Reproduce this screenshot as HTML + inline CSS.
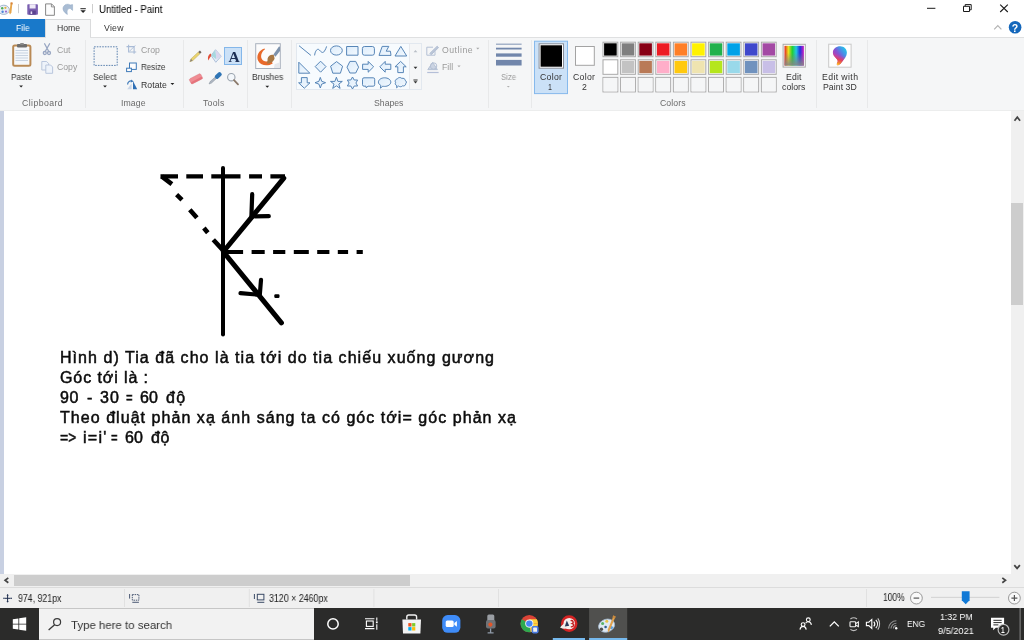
<!DOCTYPE html>
<html lang="vi"><head><meta charset="utf-8"><title>Untitled - Paint</title>
<style>
html,body{margin:0;padding:0;}
body{width:1024px;height:640px;overflow:hidden;position:relative;background:#fff;font-family:"Liberation Sans",sans-serif;}
.t{position:absolute;will-change:transform;white-space:pre;line-height:14px;height:14px;font-family:"Liberation Sans",sans-serif;}
.a{position:absolute;}
svg{position:absolute;overflow:visible;}

</style></head>
<body>
<!-- title bar -->
<div class="a" style="left:0;top:0;width:1024px;height:37px;background:#fff"></div>
<!-- tabs -->
<div class="a" style="left:0;top:18.5px;width:45px;height:18.5px;background:#1979ca"></div>
<div class="a" style="left:45px;top:18.500px;width:46px;height:19.500px;background:#f5f6f7;border:1px solid #dadbdc;border-bottom:none;box-sizing:border-box"></div>
<!-- ribbon -->
<div class="a" style="left:0;top:37px;width:1024px;height:73.5px;background:#f5f6f7;border-top:1px solid #dfe0e1;border-bottom:1px solid #eceded;box-sizing:border-box"></div>
<div class="a" style="left:46px;top:36px;width:44px;height:3px;background:#f5f6f7"></div>
<!-- canvas -->
<div class="a" style="left:0;top:110.5px;width:1011px;height:463px;background:#c8d0e2"></div>
<div class="a" style="left:3.6px;top:110.5px;width:1007.4px;height:463px;background:#fff"></div>
<!-- v scrollbar -->
<div class="a" style="left:1011px;top:110.5px;width:13px;height:463px;background:#f0f0f0"></div>
<div class="a" style="left:1011px;top:203px;width:12.3px;height:101.500px;background:#cdcdcd"></div>
<!-- h scrollbar -->
<div class="a" style="left:0;top:573.5px;width:1024px;height:14px;background:#f0f0f0"></div>
<div class="a" style="left:13.600px;top:574.700px;width:396.400px;height:11.200px;background:#cdcdcd"></div>
<!-- status bar -->
<div class="a" style="left:0;top:587px;width:1024px;height:21px;background:#f0f0f0;border-top:1px solid #dcdcdc;box-sizing:border-box"></div>
<!-- taskbar -->
<div class="a" style="left:0;top:608px;width:1024px;height:32px;background:#2b2b2a"></div>
<div class="a" style="left:38.500px;top:608px;width:275.200px;height:32px;background:#f2f2f2;border-top:1px solid #c6c6c6;border-bottom:1px solid #c6c6c6;box-sizing:border-box"></div>
<!-- drawing on canvas -->
<svg style="left:0;top:0" width="1024" height="640" viewBox="0 0 1024 640">
<g stroke="#000" stroke-width="4" fill="none" stroke-linecap="round">
<line x1="223" y1="168" x2="223" y2="334.500"/>
<line x1="283.800" y1="178.200" x2="223.500" y2="251.500" stroke-width="5"/>
<line x1="223.500" y1="252" x2="281.400" y2="322.800" stroke-width="5"/>
<polyline points="252.200,194.200 251.400,216.300 268.800,216.200" stroke-width="4.200" stroke-linejoin="round"/>
<polyline points="240.500,293.200 259.800,294.800 261,279.800" stroke-width="4.200" stroke-linejoin="round"/>
</g>
<g stroke="#000" stroke-width="4.2" fill="none" stroke-linecap="butt">
<path d="M160.5 176.3H178M186.3 176.3H203M211.300 176.300H240.500M249.100 176.300H262M270.400 176.300H285"/>
<path d="M223.4 252H243.1M251.6 252H264.7M273.1 252H285.3M293.8 252H308.8M317.2 252H329.4M337.8 252H348.1M356.6 252H362.8"/>
<path d="M161.7 176.4L171.9 184.2M176.6 194.7L182 199.8M189.8 209.7L196.9 217.8M203.9 228L207.8 232.7M213.3 239.7L223.4 250.6" stroke-width="4.6"/>
</g>
<rect x="274.300" y="294.200" width="5.200" height="3.700" rx="1.200" fill="#000"/>
</svg>
<!-- ribbon separators -->
<div class="a" style="left:85px;top:40px;width:1px;height:68px;background:#e8e9ea"></div>
<div class="a" style="left:182.5px;top:40px;width:1px;height:68px;background:#e8e9ea"></div>
<div class="a" style="left:246.5px;top:40px;width:1px;height:68px;background:#e8e9ea"></div>
<div class="a" style="left:291.3px;top:40px;width:1px;height:68px;background:#e8e9ea"></div>
<div class="a" style="left:488px;top:40px;width:1px;height:68px;background:#e8e9ea"></div>
<div class="a" style="left:531px;top:40px;width:1px;height:68px;background:#e8e9ea"></div>
<div class="a" style="left:816.3px;top:40px;width:1px;height:68px;background:#e8e9ea"></div>
<div class="a" style="left:867px;top:40px;width:1px;height:68px;background:#e8e9ea"></div>
<!-- clipboard group icons -->
<svg style="left:0;top:0" width="100" height="110" viewBox="0 0 100 110">
 <!-- paste -->
 <rect x="13.2" y="45.6" width="17.2" height="20.2" rx="1.5" fill="#fdfdfd" stroke="#b98a55" stroke-width="2"/>
 <rect x="15" y="47.6" width="13.6" height="16.4" fill="#f4f7fb"/>
 <path d="M15.5 50.5H28M15.5 53H28M15.5 55.5H28M15.5 58H28M15.5 60.5H28" stroke="#c3cede" stroke-width="0.9"/>
 <rect x="17" y="44" width="10" height="3.4" rx="1" fill="#6e6e6e"/>
 <rect x="20" y="43" width="4" height="2" rx="1" fill="#8a8a8a"/>
 <path d="M19.2 85.6h3.8l-1.9 2z" fill="#222"/>
 <!-- cut -->
 <g stroke="#98a6c2" stroke-width="1.3" fill="none" stroke-linecap="round">
  <path d="M44.6 43.8L48.8 51.5M49.6 43.8L45.2 51.5"/>
  <circle cx="44.8" cy="53" r="1.5"/><circle cx="49" cy="53" r="1.5"/>
 </g>
 <!-- copy -->
 <g fill="#eef3fa" stroke="#b3c2da" stroke-width="0.9">
  <path d="M41.8 61.5h4.8l2 2v6.5h-6.8z"/>
  <path d="M45.8 65h4.8l2 2v6.3h-6.8z"/>
 </g>
</svg>
<!-- image group icons -->
<svg style="left:0;top:0" width="200" height="110" viewBox="0 0 200 110">
 <rect x="94.1" y="46.8" width="23.1" height="18.6" fill="none" stroke="#5f84b0" stroke-width="1" stroke-dasharray="1.6 1.1"/>
 <path d="M103.1 85.4h3.8l-1.9 2z" fill="#222"/>
 <!-- crop -->
 <g stroke="#a9bbd6" stroke-width="1.1" fill="none">
  <path d="M126.5 46.6h7.6v7.2M128.6 44.8v7.2h7.6"/>
  <path d="M129.5 51.2l5.8-5.8" stroke-width="0.9"/>
 </g>
 <!-- resize -->
 <rect x="129.5" y="63" width="6.8" height="6.4" fill="#fdfdfe" stroke="#3f7ab8" stroke-width="1"/>
 <rect x="126.6" y="68.2" width="4.8" height="3.4" fill="#fdfdfe" stroke="#3f7ab8" stroke-width="1"/>
 <!-- rotate -->
 <path d="M133 81v8.3h4.2z" fill="#2f6fb5"/>
 <path d="M131.6 83.5v5.8h-4.4z" fill="#c9d6e8"/>
 <path d="M127.6 84.5c0-3 2.5-4.2 4.6-3.2" fill="none" stroke="#3f7ab8" stroke-width="1.2"/>
 <path d="M131.3 79.6l2.2 1.9-2.8 1z" fill="#3f7ab8"/>
 <path d="M170.5 83h3.8l-1.9 2z" fill="#222"/>
</svg>
<!-- tools group icons -->
<div class="a" style="left:224px;top:47px;width:18px;height:18px;background:#cbe1f7;border:1px solid #84b7ea;box-sizing:border-box"></div>
<span class="t" style="left:227.500px;top:49.600px;width:12px;text-align:center;font-family:'Liberation Serif',serif;font-weight:bold;font-size:15.5px;line-height:14px;color:#1c2f55">A</span>
<svg style="left:0;top:0" width="300" height="110" viewBox="0 0 300 110">
 <!-- pencil -->
 <g transform="translate(189.800,61.700) rotate(-43.200)">
  <path d="M0 0l2.800-1.250h10v2.500h-10z" fill="#e9d36f" stroke="#b5a35c" stroke-width="0.400"/>
  <path d="M0 0l2.800-1.250v2.500z" fill="#8d8577"/>
  <rect x="12.800" y="-1.250" width="2.200" height="2.500" fill="#6f675e"/>
 </g>
 <!-- fill bucket -->
 <path d="M215.500 49.700l5.700 6.500-5.400 6.100-4.700-6.800z" fill="#e3edf7" stroke="#9fb4d2" stroke-width="0.800"/>
 <path d="M215.500 49.700l0.800 9.500-5.200-3.700z" fill="#a8d8df"/>
 <path d="M215.500 49.700l0.800 9.500 4.900-3z" fill="#d9d6ee"/>
 <path d="M211 53.600c-2.800 1-3.600 4.200-2.600 6.800 0.800-1.800 1.600-3.200 2.800-4.400z" fill="#e2503a"/>
 <!-- eraser -->
 <g transform="translate(190.200,81.500) rotate(-27)">
  <rect x="0" y="-2.6" width="12.6" height="5.6" rx="1.2" fill="#f08c93" stroke="#d9747c" stroke-width="0.5"/>
  <rect x="0" y="1" width="12.6" height="2" rx="1" fill="#e5737c"/>
 </g>
 <!-- picker -->
 <g transform="translate(209,84) rotate(-42.5)">
  <path d="M0 0l2.5-1h7.5v2h-7.5z" fill="#aeb6c2" stroke="#7d8794" stroke-width="0.4"/>
  <rect x="8.8" y="-2.1" width="7.6" height="4.2" rx="1.8" fill="#2f75b5"/>
 </g>
 <!-- magnifier -->
 <circle cx="231.3" cy="77.2" r="3.7" fill="#f3f7fb" stroke="#9aa3ae" stroke-width="1.1"/>
 <path d="M234 80.2l4 4.2" stroke="#8b7a6b" stroke-width="1.8" stroke-linecap="round"/>
 <!-- brushes -->
 <rect x="255.7" y="43.7" width="24.6" height="24.8" fill="#fcfcfc" stroke="#a9b1bd" stroke-width="1"/>
 <path d="M264.5 48.4c-5.6 1.6-8.8 7.6-6.2 12.6 2.6 4.8 9.6 5.6 14.4 2.4l-1.6-3.4c-3.4 2-7.8 2-9.4-1.2-1.6-3.4 0.4-7.6 3.4-9.6z" fill="#e8692a"/>
 <path d="M267.6 58.6c0.6-2.8 3.6-4.6 6.2-3.6l0.8 3.4c-0.8 3.2-4.4 5.4-8 5.2 1.2-1.4 0.8-3.2 1-5z" fill="#a87844"/>
 <path d="M273.4 54.6l5.6-8.2 1 0.4v4.2l-4.6 5.8z" fill="#7e93ad"/>
 <path d="M274.6 64.2l5.4-2v5.9h-6z" fill="#e6e8ec"/>
 <path d="M265.4 85.8h3.8l-1.9 2z" fill="#222"/>
</svg>
<!-- shapes gallery -->
<div class="a" style="left:296.4px;top:43.3px;width:125.2px;height:47px;background:#f7fbfe;border:1px solid #e2e8ef;box-sizing:border-box"></div>
<div class="a" style="left:409.4px;top:44.3px;width:11.2px;height:45px;background:#f5f6f7;border-left:1px solid #e6e9ee;box-sizing:border-box"></div>
<svg style="left:0;top:0" width="500" height="110" viewBox="0 0 500 110">
<defs><linearGradient id="sf" x1="0" y1="0" x2="1" y2="1"><stop offset="0" stop-color="#dcecfb"/><stop offset="1" stop-color="#f3f9fe"/></linearGradient></defs>
<g fill="url(#sf)" stroke="#4f7fb3" stroke-width="0.95" stroke-linejoin="round">
 <path d="M299 45.7L310.9 55.4" fill="none"/>
 <path d="M314.6 55.4c0.6-5 3-7.4 4.8-5.4 1.8 2.2 3.4 3.6 5 1.2 1-1.6 1.8-3.2 2.2-4.8" fill="none"/>
 <ellipse cx="336.4" cy="50.5" rx="5.9" ry="4.6"/>
 <rect x="346.6" y="46.5" width="11.4" height="8.7"/>
 <rect x="362.4" y="46.5" width="12" height="8.7" rx="2"/>
 <path d="M382.2 46.4h6.6l-2.6 4.8h4.2l0.6 4.2h-12z"/>
 <path d="M400.8 46.4l5.9 9.6h-11.7z"/>
 <path d="M298.8 62.2v11h11z"/>
 <path d="M320.6 61.2l5.4 5.4-5.4 5.6-5.4-5.6z"/>
 <path d="M336.6 61.6l6 4.6-2.2 7h-7.6l-2.2-7z"/>
 <path d="M349.9 61.4h5.8l2.9 5.8-2.9 5.8h-5.8l-2.9-5.8z"/>
 <path d="M362.6 64.2h5.6v-2.8l5.4 5.4-5.4 5.4v-2.8h-5.6z"/>
 <path d="M390.8 64.2h-5.6v-2.8l-5.4 5.4 5.4 5.4v-2.8h5.6z"/>
 <path d="M397.8 72.6v-5.8h-2.8l5.6-5.4 5.6 5.4h-2.8v5.8z"/>
 <path d="M301.4 77.6h5.8v5.2h2.8l-5.7 5.4-5.7-5.4h2.8z"/>
 <path d="M320.3 77.4l1.4 3.9 3.9 1.4-3.9 1.4-1.4 3.9-1.4-3.9-3.9-1.4 3.9-1.4z"/>
 <path d="M336.4 77.2l1.5 4.2h4.4l-3.5 2.7 1.3 4.3-3.7-2.6-3.7 2.6 1.3-4.3-3.5-2.7h4.4z"/>
 <path d="M352.5 77l1.7 3h3.4l-1.7 3 1.7 3h-3.4l-1.7 3-1.7-3h-3.4l1.7-3-1.7-3h3.4z"/>
 <path d="M364 77.8h9.2a1.5 1.5 0 0 1 1.5 1.5v5.4a1.5 1.5 0 0 1 -1.5 1.5h-5.2l-1.8 1.6-0.2-1.6h-2a1.5 1.5 0 0 1 -1.5-1.5v-5.4a1.5 1.5 0 0 1 1.5-1.5z"/>
 <path d="M384.6 77.8c3.4 0 6.2 1.9 6.2 4.3s-2.800 4.300-6.200 4.300c-0.600 0-1.200 0-1.800-0.200l-2.400 2 0.400-2.800c-1.500-0.800-2.400-2-2.400-3.300 0-2.400 2.800-4.300 6.200-4.300z"/>
 <path d="M397.600 78.600c1-1.400 3.200-1.400 4.200-0.200 1.600-0.600 3.400 0.400 3.400 2 1.400 0.600 1.600 2.600 0.400 3.400 0.200 1.600-1.600 2.600-3 2-1 1.200-3 1.200-4 0.200l-2 1.800 0.200-2.200c-1.400-0.400-2-2-1.200-3.200-1-1.200-0.200-3.200 2-3.800z"/>
</g>
<path d="M413.600 52.300h3.800l-1.900-2.200z" fill="#b9bec6"/>
<path d="M413.600 66.700h3.800l-1.900 2.200z" fill="#333"/>
<path d="M413.600 81.300h3.800l-1.900 2.200zM413.400 79.600h4.200v1h-4.200z" fill="#333"/>
<!-- outline / fill icons -->
<g stroke="#b4c0d4" fill="none" stroke-width="1">
 <path d="M433 47.200h-6.200v8h8.200v-4"/>
 <path d="M429.800 53.400l7.400-7.200 1.400 1.400-7.400 7.200z" fill="#b9c4d6"/>
 <path d="M427.200 72.500h11.400" stroke-width="1.200" stroke="#b4bfd8"/>
 <path d="M432.600 62.400l4.800 7.200h-9.600z" fill="#cbd4e3"/>
 <circle cx="433.600" cy="66" r="3.200" />
</g>
<path d="M476.200 47.800h3.200l-1.600 1.800z" fill="#a8a8a8"/>
<path d="M457.400 65.400h3.200l-1.600 1.800z" fill="#a8a8a8"/>
</svg>
<!-- size + colors -->
<svg style="left:0;top:0" width="900" height="110" viewBox="0 0 900 110">
<g fill="#7186ab"><rect x="496" y="43.7" width="25.600" height="0.900"/><rect x="496" y="47.700" width="25.600" height="1.800"/><rect x="496" y="53.400" width="25.600" height="3.300"/><rect x="496" y="59.900" width="25.600" height="5.600"/></g>
<path d="M506.800 86h3l-1.500 1.600z" fill="#b0b0b0"/>
<rect x="534.500" y="41.200" width="33" height="52.400" fill="#cbe1f7" stroke="#86b9ec" stroke-width="1"/>
<rect x="539.100" y="43.800" width="24.400" height="24.400" fill="#fff" stroke="#8a8f99" stroke-width="1"/>
<rect x="540.600" y="45.300" width="21.400" height="21.400" fill="#000"/>
<rect x="575.500" y="46.500" width="18.800" height="18.800" fill="#fff" stroke="#a3a3a3" stroke-width="1"/>
<rect x="577" y="48" width="15.800" height="15.800" fill="#fff"/>
<rect x="603.0" y="42.2" width="14.800" height="14.500" fill="#fff" stroke="#a8a8a8" stroke-width="1"/>
<rect x="604.1" y="43.3" width="12.600" height="12.300" fill="#000000"/>
<rect x="620.6" y="42.2" width="14.800" height="14.500" fill="#fff" stroke="#a8a8a8" stroke-width="1"/>
<rect x="621.7" y="43.3" width="12.600" height="12.300" fill="#7f7f7f"/>
<rect x="638.2" y="42.2" width="14.800" height="14.500" fill="#fff" stroke="#a8a8a8" stroke-width="1"/>
<rect x="639.3" y="43.3" width="12.600" height="12.300" fill="#880015"/>
<rect x="655.8" y="42.2" width="14.800" height="14.500" fill="#fff" stroke="#a8a8a8" stroke-width="1"/>
<rect x="656.9" y="43.3" width="12.600" height="12.300" fill="#ed1c24"/>
<rect x="673.4" y="42.2" width="14.800" height="14.500" fill="#fff" stroke="#a8a8a8" stroke-width="1"/>
<rect x="674.5" y="43.3" width="12.600" height="12.300" fill="#ff7f27"/>
<rect x="691.0" y="42.2" width="14.800" height="14.500" fill="#fff" stroke="#a8a8a8" stroke-width="1"/>
<rect x="692.1" y="43.3" width="12.600" height="12.300" fill="#fff200"/>
<rect x="708.6" y="42.2" width="14.800" height="14.500" fill="#fff" stroke="#a8a8a8" stroke-width="1"/>
<rect x="709.7" y="43.3" width="12.600" height="12.300" fill="#22b14c"/>
<rect x="726.2" y="42.2" width="14.800" height="14.500" fill="#fff" stroke="#a8a8a8" stroke-width="1"/>
<rect x="727.3" y="43.3" width="12.600" height="12.300" fill="#00a2e8"/>
<rect x="743.8" y="42.2" width="14.800" height="14.500" fill="#fff" stroke="#a8a8a8" stroke-width="1"/>
<rect x="744.9" y="43.3" width="12.600" height="12.300" fill="#3f48cc"/>
<rect x="761.4" y="42.2" width="14.800" height="14.500" fill="#fff" stroke="#a8a8a8" stroke-width="1"/>
<rect x="762.5" y="43.3" width="12.600" height="12.300" fill="#a349a4"/>
<rect x="603.0" y="59.8" width="14.800" height="14.500" fill="#fff" stroke="#a8a8a8" stroke-width="1"/>
<rect x="604.1" y="60.9" width="12.600" height="12.300" fill="#ffffff"/>
<rect x="620.6" y="59.8" width="14.800" height="14.500" fill="#fff" stroke="#a8a8a8" stroke-width="1"/>
<rect x="621.7" y="60.9" width="12.600" height="12.300" fill="#c3c3c3"/>
<rect x="638.2" y="59.8" width="14.800" height="14.500" fill="#fff" stroke="#a8a8a8" stroke-width="1"/>
<rect x="639.3" y="60.9" width="12.600" height="12.300" fill="#b97a57"/>
<rect x="655.8" y="59.8" width="14.800" height="14.500" fill="#fff" stroke="#a8a8a8" stroke-width="1"/>
<rect x="656.9" y="60.9" width="12.600" height="12.300" fill="#ffaec9"/>
<rect x="673.4" y="59.8" width="14.800" height="14.500" fill="#fff" stroke="#a8a8a8" stroke-width="1"/>
<rect x="674.5" y="60.9" width="12.600" height="12.300" fill="#ffc90e"/>
<rect x="691.0" y="59.8" width="14.800" height="14.500" fill="#fff" stroke="#a8a8a8" stroke-width="1"/>
<rect x="692.1" y="60.9" width="12.600" height="12.300" fill="#efe4b0"/>
<rect x="708.6" y="59.8" width="14.800" height="14.500" fill="#fff" stroke="#a8a8a8" stroke-width="1"/>
<rect x="709.7" y="60.9" width="12.600" height="12.300" fill="#b5e61d"/>
<rect x="726.2" y="59.8" width="14.800" height="14.500" fill="#fff" stroke="#a8a8a8" stroke-width="1"/>
<rect x="727.3" y="60.9" width="12.600" height="12.300" fill="#99d9ea"/>
<rect x="743.8" y="59.8" width="14.800" height="14.500" fill="#fff" stroke="#a8a8a8" stroke-width="1"/>
<rect x="744.9" y="60.9" width="12.600" height="12.300" fill="#7092be"/>
<rect x="761.4" y="59.8" width="14.800" height="14.500" fill="#fff" stroke="#a8a8a8" stroke-width="1"/>
<rect x="762.5" y="60.9" width="12.600" height="12.300" fill="#c8bfe7"/>
<rect x="603.0" y="77.4" width="14.800" height="14.500" fill="#fff" stroke="#a8a8a8" stroke-width="1"/>
<rect x="603.5" y="77.9" width="13.800" height="13.500" fill="#f5f6f7"/>
<rect x="620.6" y="77.4" width="14.800" height="14.500" fill="#fff" stroke="#a8a8a8" stroke-width="1"/>
<rect x="621.1" y="77.9" width="13.800" height="13.500" fill="#f5f6f7"/>
<rect x="638.2" y="77.4" width="14.800" height="14.500" fill="#fff" stroke="#a8a8a8" stroke-width="1"/>
<rect x="638.7" y="77.9" width="13.800" height="13.500" fill="#f5f6f7"/>
<rect x="655.8" y="77.4" width="14.800" height="14.500" fill="#fff" stroke="#a8a8a8" stroke-width="1"/>
<rect x="656.3" y="77.9" width="13.800" height="13.500" fill="#f5f6f7"/>
<rect x="673.4" y="77.4" width="14.800" height="14.500" fill="#fff" stroke="#a8a8a8" stroke-width="1"/>
<rect x="673.9" y="77.9" width="13.800" height="13.500" fill="#f5f6f7"/>
<rect x="691.0" y="77.4" width="14.800" height="14.500" fill="#fff" stroke="#a8a8a8" stroke-width="1"/>
<rect x="691.5" y="77.9" width="13.800" height="13.500" fill="#f5f6f7"/>
<rect x="708.6" y="77.4" width="14.800" height="14.500" fill="#fff" stroke="#a8a8a8" stroke-width="1"/>
<rect x="709.1" y="77.9" width="13.800" height="13.500" fill="#f5f6f7"/>
<rect x="726.2" y="77.4" width="14.800" height="14.500" fill="#fff" stroke="#a8a8a8" stroke-width="1"/>
<rect x="726.7" y="77.9" width="13.800" height="13.500" fill="#f5f6f7"/>
<rect x="743.8" y="77.4" width="14.800" height="14.500" fill="#fff" stroke="#a8a8a8" stroke-width="1"/>
<rect x="744.3" y="77.9" width="13.800" height="13.500" fill="#f5f6f7"/>
<rect x="761.4" y="77.4" width="14.800" height="14.500" fill="#fff" stroke="#a8a8a8" stroke-width="1"/>
<rect x="761.9" y="77.9" width="13.800" height="13.500" fill="#f5f6f7"/>
<defs><linearGradient id="rb" x1="0" y1="0" x2="1" y2="0"><stop offset="0" stop-color="#e02020"/><stop offset="0.200" stop-color="#f0e020"/><stop offset="0.400" stop-color="#20d030"/><stop offset="0.600" stop-color="#20c8e0"/><stop offset="0.800" stop-color="#2030e0"/><stop offset="1" stop-color="#d020c0"/></linearGradient><linearGradient id="gy" x1="0" y1="0" x2="0" y2="1"><stop offset="0.350" stop-color="#808080" stop-opacity="0"/><stop offset="1" stop-color="#868686" stop-opacity="0.950"/></linearGradient><linearGradient id="p3" x1="0.900" y1="0.100" x2="0.200" y2="0.800"><stop offset="0" stop-color="#22c8ea"/><stop offset="0.350" stop-color="#4f86e6"/><stop offset="0.600" stop-color="#8a4fd0"/><stop offset="1" stop-color="#c63aa8"/></linearGradient><linearGradient id="p3b" x1="0.500" y1="0.450" x2="0.350" y2="1"><stop offset="0" stop-color="#d8409a" stop-opacity="0"/><stop offset="0.450" stop-color="#e6405a" stop-opacity="0.950"/><stop offset="0.800" stop-color="#f5902a"/><stop offset="1" stop-color="#ffd83a"/></linearGradient></defs>
<rect x="783.100" y="44.300" width="22.200" height="22.800" fill="#fff" stroke="#a9a9a9" stroke-width="1"/>
<rect x="784.500" y="45.800" width="19.400" height="19.800" fill="url(#rb)"/>
<rect x="784.500" y="45.800" width="19.400" height="19.800" fill="url(#gy)"/>
<rect x="828.700" y="44.200" width="22.400" height="23" fill="#fff" stroke="#c9c9c9" stroke-width="1"/>
<path d="M840.200 46.300c3.900 0 6.700 2.900 6.700 6.500 0 3.600-2.600 6.200-4.600 8.800-1 1.400-2.200 3.200-4 3.600-1.200 0.200-1.800-0.800-1.400-1.800 0.400-1 1-1.600 0.800-2.600-0.300-1.400-1.800-2.400-3-4-1.200-1.500-1.800-2.800-1.800-4.400 0-3.500 3.300-6.100 7.300-6.100z" fill="url(#p3)"/><path d="M840.200 46.300c3.900 0 6.700 2.900 6.700 6.500 0 3.600-2.600 6.200-4.600 8.800-1 1.400-2.200 3.200-4 3.600-1.200 0.200-1.800-0.800-1.400-1.800 0.400-1 1-1.600 0.800-2.600-0.300-1.400-1.800-2.400-3-4-1.200-1.500-1.800-2.800-1.800-4.400 0-3.500 3.300-6.100 7.300-6.100z" fill="url(#p3b)"/>
</svg>
<!-- title bar icons -->
<svg style="left:0;top:0" width="1024" height="40" viewBox="0 0 1024 40">
 <!-- app icon (palette + brush), cut at the left edge -->
 <ellipse cx="3.800" cy="9.800" rx="5.600" ry="4.600" fill="#e8eef6" stroke="#8fa6c4" stroke-width="0.800"/>
 <circle cx="2.200" cy="8.200" r="1.200" fill="#4fae5a"/><circle cx="5.400" cy="7.800" r="1.100" fill="#e3b13c"/>
 <circle cx="2.600" cy="11.800" r="1.200" fill="#4b87d9"/><circle cx="6" cy="11.600" r="1.100" fill="#9a6ad0"/>
 <path d="M10.800 2.600l1.600 0.400-1 9.600-1.400 1.800-0.800-1.800z" fill="#e7a64b"/>
 <path d="M10.600 2.400h2v2h-2z" fill="#d9843a"/>
 <rect x="18" y="4" width="0.900" height="9.200" fill="#c8c8c8"/>
 <!-- save -->
 <rect x="27.300" y="4.300" width="10.600" height="10.400" rx="0.800" fill="#7a5fb0"/>
 <rect x="29.600" y="4.300" width="6" height="4.200" fill="#efeaf8"/>
 <rect x="29.400" y="10.600" width="6.400" height="4.100" fill="#5a4390"/>
 <rect x="30.600" y="11.400" width="1.600" height="2.600" fill="#e6def5"/>
 <!-- new -->
 <path d="M45.600 3.900h6l2.800 2.800v8.600h-8.800z" fill="#fdfdfd" stroke="#7a7a7a" stroke-width="0.900"/>
 <path d="M51.400 3.900v3h3" fill="none" stroke="#7a7a7a" stroke-width="0.800"/>
 <!-- undo (disabled) -->
 <path d="M72.600 4.600v5.800l-2.200-1.800c-2.400-0.400-4 1.600-3 5.800-3.600-2-5.400-5.400-3.800-8 1.600-2.400 4.400-2.800 6.600-1.400z" fill="#a9bcd3" stroke="#8fa6c2" stroke-width="0.500"/>
 <!-- qat dropdown -->
 <rect x="80.400" y="8.200" width="5.400" height="1" fill="#222"/>
 <path d="M80.400 10.200h5.400l-2.700 2.700z" fill="#222"/>
 <rect x="92" y="4" width="0.900" height="9.200" fill="#c8c8c8"/>
 <!-- window controls -->
 <path d="M927 8.300h8.400" stroke="#1a1a1a" stroke-width="1"/>
 <path d="M963.500 6.300h6v5.200h-6z" fill="none" stroke="#1a1a1a" stroke-width="1"/>
 <path d="M965.200 6.300v-1.700h6v5.200h-1.700" fill="none" stroke="#1a1a1a" stroke-width="1"/>
 <path d="M1000.200 4.600l7.600 7.400M1007.800 4.600l-7.600 7.400" stroke="#1a1a1a" stroke-width="1.100"/>
 <!-- collapse + help -->
 <path d="M994.200 29.400l3.600-3.800 3.600 3.800" fill="none" stroke="#b4b4b4" stroke-width="1.200"/>
 <circle cx="1015.100" cy="27.300" r="6.300" fill="#1467bb"/>
</svg>
<span class="t" style="left:1010.100px;top:20.500px;width:10px;text-align:center;font-weight:bold;font-size:10.500px;color:#fff">?</span>
<!-- scrollbar arrows, status bar, taskbar icons -->
<svg style="left:0;top:0" width="1024" height="640" viewBox="0 0 1024 640">
 <!-- v scrollbar arrows -->
 <path d="M1014.500 120.700l2.800-3.500 2.800 3.500" fill="none" stroke="#444" stroke-width="1.700"/>
 <path d="M1014.300 565.100l2.800 3.300 2.800-3.300" fill="none" stroke="#444" stroke-width="1.700"/>
 <!-- h scrollbar arrows -->
 <path d="M8.300 577.900l-3.200 2.400 3.200 2.400" fill="none" stroke="#444" stroke-width="1.700"/>
 <path d="M1002.300 577.900l3.200 2.400-3.200 2.400" fill="none" stroke="#444" stroke-width="1.700"/>
 <!-- status separators -->
 <g fill="#e1e1e1"><rect x="124" y="589" width="1" height="18"/><rect x="248.800" y="589" width="1" height="18"/><rect x="373.400" y="589" width="1" height="18"/><rect x="498" y="589" width="1" height="18"/><rect x="866" y="589" width="1" height="18"/></g>
 <!-- cursor pos icon -->
 <g stroke="#1e2e4e" stroke-width="1" fill="#1e2e4e">
  <path d="M7.600 594.400v7.800M4.600 598.300h6" fill="none"/>
  <path d="M6.400 595.600l1.200-1.400 1.200 1.400zM6.400 601l1.200 1.400 1.200-1.400z" stroke="none"/>
  <rect x="3.300" y="597.700" width="1.200" height="1.200" stroke="none"/><rect x="10.700" y="597.700" width="1.200" height="1.200" stroke="none"/>
 </g>
 <!-- selection size icon -->
 <g stroke="#3a4a66" stroke-width="0.900" fill="none">
  <rect x="132.300" y="594.600" width="6.600" height="5.600" stroke-dasharray="1.500 0.800"/>
  <path d="M129.600 594v4.600M132.300 602.300h6.600"/>
 </g>
 <!-- image size icon -->
 <g stroke="#3a4a66" stroke-width="1" fill="none">
  <rect x="257.300" y="594.300" width="6.600" height="5.600"/>
  <path d="M254.400 594v5M257.300 602.300h7"/>
 </g>
 <!-- zoom controls -->
 <circle cx="916.400" cy="598.100" r="5.900" fill="#f9f9f9" stroke="#8d8d8d" stroke-width="0.900"/>
 <path d="M913.600 598.100h5.600" stroke="#555" stroke-width="1.200"/>
 <circle cx="1014.400" cy="598.100" r="5.900" fill="#f9f9f9" stroke="#8d8d8d" stroke-width="0.900"/>
 <path d="M1011.400 598.100h6M1014.400 595.100v6" stroke="#555" stroke-width="1.200"/>
 <rect x="931" y="596.800" width="68.400" height="1.200" fill="#d6d6d6"/>
 <path d="M961.800 591.200h7.800v9l-3.900 4-3.900-4z" fill="#1079d6"/>
 <!-- taskbar: start -->
 <g fill="#fff">
  <path d="M12.800 619.200l5.600-0.800v5.300h-5.600zM19.200 618.300l7-1v6.400h-7zM12.800 624.400h5.600v5.200l-5.600-0.800zM19.200 624.400h7v6.300l-7-1z"/>
 </g>
 <!-- search icon -->
 <circle cx="57.100" cy="622.100" r="3.500" fill="none" stroke="#3a3a3a" stroke-width="1.200"/>
 <path d="M54.600 624.700l-6 5.400" stroke="#3a3a3a" stroke-width="1.300"/>
 <!-- cortana -->
 <circle cx="333" cy="623.900" r="5.200" fill="none" stroke="#fff" stroke-width="1.500"/>
 <!-- task view -->
 <g stroke="#fff" stroke-width="1.100" fill="none">
  <path d="M365 618.800h9.400M365 628.600h9.400M376.800 617.600v3.200M376.800 624.200v5.600"/>
  <rect x="366.400" y="621" width="6.800" height="5.400"/>
  <rect x="375.900" y="621.400" width="1.800" height="1.800" fill="#fff" stroke="none"/>
 </g>
 <!-- store -->
 <path d="M406.800 619.600v-2.600a2 2 0 0 1 2-2h5.800a2 2 0 0 1 2 2v2.600" fill="none" stroke="#f1f1f1" stroke-width="1.400"/>
 <path d="M402.400 619.500h18.600l-0.600 14h-17.400z" fill="#f3f3f3"/>
 <rect x="408.300" y="623.100" width="3.200" height="3.400" fill="#f1511b"/><rect x="412.100" y="623.100" width="3.200" height="3.400" fill="#80cc28"/>
 <rect x="408.300" y="627.100" width="3.200" height="3.400" fill="#00adef"/><rect x="412.100" y="627.100" width="3.200" height="3.400" fill="#fbbc09"/>
 <!-- zoom -->
 <rect x="442.200" y="615.100" width="18.200" height="17.700" rx="5.500" fill="#3f8cf8"/>
 <rect x="445.700" y="620.600" width="8" height="6.500" rx="1.500" fill="#fff"/>
 <path d="M454.300 623l2.600-2v5.800l-2.600-2z" fill="#fff"/>
 <!-- recorder -->
 <rect x="487.300" y="614.400" width="7" height="7.400" rx="1.500" fill="#9a9ea3"/>
 <rect x="486" y="620" width="9.600" height="8.400" rx="2" fill="#6f7276"/>
 <circle cx="490.400" cy="624.600" r="2.100" fill="#e0562a"/>
 <path d="M490.600 628.400v4M487.600 632.900h6" stroke="#8f9aa8" stroke-width="1.300"/>
 <!-- chrome -->
 <circle cx="529.300" cy="623.600" r="8.700" fill="#dc4437"/>
 <path d="M529.300 623.600l-7.540 -4.350a8.700 8.700 0 0 0 7.540 13.050a8.700 8.700 0 0 0 1.500 -0.130z" fill="#2da94f"/>
 <path d="M529.300 623.600h8.700a8.700 8.700 0 0 1 -7.200 8.570z" fill="#fdd23d"/>
 <path d="M529.300 623.600l8.700 0a8.700 8.700 0 0 0 -1.160 -4.350h-7.540z" fill="#fdd23d"/>
 <circle cx="529.300" cy="623.600" r="4.100" fill="#f4f4f4"/><circle cx="529.300" cy="623.600" r="3.200" fill="#4687f4"/>
 <rect x="531.600" y="626" width="7" height="7.400" rx="1.800" fill="#4a7be0"/><rect x="533.200" y="627.600" width="3.800" height="4.200" rx="0.600" fill="#f1f1f1"/>
 <!-- red app -->
 <rect x="552.800" y="638" width="32.200" height="2" fill="#76b9ed"/>
 <circle cx="569.200" cy="623.600" r="7" fill="#f6f0ee" stroke="#d52424" stroke-width="2.600"/>
 <path d="M560 627.600c2.600-3.600 5.600-5.600 8.800-6.400l-0.600 6.800c-2.600 1.200-5.400 1-8.200-0.400z" fill="#f4ecea"/>
 <path d="M566.800 620.400l2.400 5.400-4.400 0.600z" fill="#2a3a5a"/>
 <path d="M570.600 620.600c2.400-0.600 3.600 2 1.600 3 2.400 0.600 1.800 3.600-1.400 3.200" fill="none" stroke="#c02020" stroke-width="1.400"/>
 <!-- paint (active) -->
 <rect x="589.100" y="608" width="38.100" height="32" fill="#50504e"/>
 <rect x="589.100" y="638" width="38.100" height="2" fill="#76b9ed"/>
 <ellipse cx="606.600" cy="625.600" rx="8.200" ry="6.400" transform="rotate(-18 606.600 625.600)" fill="#dfe9f3" stroke="#9fb6cf" stroke-width="0.700"/>
 <circle cx="601.400" cy="629.200" r="1.700" fill="#50504e"/>
 <circle cx="602.600" cy="623.400" r="1.500" fill="#58b368"/><circle cx="606.800" cy="621.200" r="1.500" fill="#e8c44a"/>
 <circle cx="605.600" cy="627" r="1.300" fill="#2f5f8f"/><circle cx="611.400" cy="627.600" r="1.600" fill="#5aa0e0"/>
 <path d="M613.600 615.800l1.800 1-5.600 13.400-1.800 2.200-0.200-3z" fill="#e2a24c"/>
 <path d="M613.200 615.200l2.600 1.400-1 2.200-2.400-1.400z" fill="#c98a3e"/>
 <!-- people -->
 <g stroke="#fff" stroke-width="1.100" fill="none">
  <circle cx="803.100" cy="624.600" r="1.900"/><path d="M800 629.600c0.300-2.400 1.600-3.200 3.100-3.200s2.800 0.800 3.100 3.200"/>
  <circle cx="808.300" cy="619.800" r="1.900"/><path d="M805.600 623.200c0.500-1 1.500-1.500 2.700-1.500 1.500 0 2.800 0.800 3.100 3.200"/>
 </g>
 <!-- chevron -->
 <path d="M829.800 626.400l4.500-4.500 4.500 4.500" fill="none" stroke="#fff" stroke-width="1.300"/>
 <!-- meet now -->
 <g stroke="#f0f0f0" stroke-width="1.100" fill="none">
  <rect x="850" y="621.700" width="5.600" height="5" rx="0.800"/>
  <path d="M855.800 623.400l2.600-1.400v4.600l-2.600-1.400"/>
  <path d="M850.400 619c1.800-1.400 4.800-1.400 6.600 0M850.400 629.400c1.800 1.400 4.800 1.400 6.600 0" stroke="#bdbdbd"/>
 </g>
 <!-- speaker -->
 <g stroke="#fff" stroke-width="1.100" fill="none">
  <path d="M866.400 622.200h2.400l3-2.800v9l-3-2.800h-2.400z"/>
  <path d="M873.800 621.600c1.200 1.400 1.200 3.400 0 4.800M875.800 619.800c2.200 2.400 2.200 6 0 8.400"/>
  <path d="M877.800 618.400c2.400 3.200 2.400 8 0 11.200" stroke="#c8c8c8"/>
 </g>
 <!-- wifi -->
 <g fill="none" stroke="#8f8f8f" stroke-width="1.100">
  <path d="M888.600 628.600a7.800 7.800 0 0 1 7.800-7.800"/><path d="M891 628.600a5.400 5.400 0 0 1 5.400-5.400"/><path d="M893.400 628.600a3 3 0 0 1 3-3"/>
 </g>
 <circle cx="896.200" cy="628.300" r="1.200" fill="#fff"/>
 <!-- notification -->
 <path d="M991 617.700h13.100v10.100h-8.300l-2.600 2.400v-2.400h-2.200z" fill="#fff"/>
 <path d="M993.400 620.300h8.300M993.400 622.600h8.300M993.400 624.900h5" stroke="#2a2a29" stroke-width="1"/>
 <circle cx="1003.500" cy="629.800" r="5.400" fill="#2a2a29" stroke="#bdbdbd" stroke-width="1.200"/>
 <rect x="1019.600" y="608" width="1" height="32" fill="#8a8a8a"/>
</svg>

<!-- labels -->
<span class="t" id="l0" style="left:98.60px;top:3.20px;font-size:10px;color:#000;letter-spacing:0.000px;transform:scaleX(0.9666);transform-origin:0 50%;">Untitled - Paint</span>
<span class="t" id="l1" style="left:15.80px;top:21.10px;font-size:8.7px;color:#fff;letter-spacing:0.000px;transform:scaleX(0.9643);transform-origin:0 50%;">File</span>
<span class="t" id="l2" style="left:56.60px;top:21.10px;font-size:8.7px;color:#333;letter-spacing:0.000px;transform:scaleX(0.9919);transform-origin:0 50%;">Home</span>
<span class="t" id="l3" style="left:103.50px;top:21.10px;font-size:8.7px;color:#333;letter-spacing:0.271px;">View</span>
<span class="t" id="l4" style="left:10.70px;top:69.80px;font-size:8.7px;color:#333;letter-spacing:0.000px;transform:scaleX(0.9406);transform-origin:0 50%;">Paste</span>
<span class="t" id="l5" style="left:56.60px;top:42.80px;font-size:8.7px;color:#9a9a9a;letter-spacing:0.000px;transform:scaleX(0.9903);transform-origin:0 50%;">Cut</span>
<span class="t" id="l6" style="left:56.60px;top:60.40px;font-size:8.7px;color:#9a9a9a;letter-spacing:0.000px;transform:scaleX(0.9812);transform-origin:0 50%;">Copy</span>
<span class="t" id="l7" style="left:93.00px;top:69.80px;font-size:8.7px;color:#333;letter-spacing:0.000px;transform:scaleX(0.9770);transform-origin:0 50%;">Select</span>
<span class="t" id="l8" style="left:140.60px;top:42.80px;font-size:8.7px;color:#9a9a9a;letter-spacing:0.000px;transform:scaleX(0.9765);transform-origin:0 50%;">Crop</span>
<span class="t" id="l9" style="left:140.60px;top:60.40px;font-size:8.7px;color:#333;letter-spacing:0.000px;transform:scaleX(0.9186);transform-origin:0 50%;">Resize</span>
<span class="t" id="l10" style="left:140.60px;top:78.00px;font-size:8.7px;color:#333;letter-spacing:0.038px;">Rotate</span>
<span class="t" id="l11" style="left:252.40px;top:69.90px;font-size:8.7px;color:#333;letter-spacing:0.000px;transform:scaleX(0.9820);transform-origin:0 50%;">Brushes</span>
<span class="t" id="l12" style="left:442.00px;top:42.50px;font-size:8.7px;color:#9a9a9a;letter-spacing:0.511px;">Outline</span>
<span class="t" id="l13" style="left:442.00px;top:60.00px;font-size:8.7px;color:#9a9a9a;letter-spacing:0.000px;transform:scaleX(0.9902);transform-origin:0 50%;">Fill</span>
<span class="t" id="l14" style="left:500.50px;top:69.90px;font-size:8.7px;color:#9a9a9a;letter-spacing:0.000px;transform:scaleX(0.8991);transform-origin:0 50%;">Size</span>
<span class="t" id="l15" style="left:539.60px;top:69.90px;font-size:8.7px;color:#333;letter-spacing:0.309px;">Color</span>
<span class="t" id="l16" style="left:548.30px;top:80.20px;font-size:8.7px;color:#333;letter-spacing:0.000px;transform:scaleX(0.8258);transform-origin:0 50%;">1</span>
<span class="t" id="l17" style="left:573.00px;top:69.90px;font-size:8.7px;color:#333;letter-spacing:0.309px;">Color</span>
<span class="t" id="l18" style="left:581.60px;top:80.20px;font-size:8.7px;color:#333;letter-spacing:0.000px;transform:scaleX(0.9910);transform-origin:0 50%;">2</span>
<span class="t" id="l19" style="left:785.80px;top:69.90px;font-size:8.7px;color:#333;letter-spacing:0.155px;">Edit</span>
<span class="t" id="l20" style="left:782.30px;top:80.20px;font-size:8.7px;color:#333;letter-spacing:0.043px;">colors</span>
<span class="t" id="l21" style="left:822.00px;top:69.90px;font-size:8.7px;color:#333;letter-spacing:0.395px;">Edit with</span>
<span class="t" id="l22" style="left:822.70px;top:80.20px;font-size:8.7px;color:#333;letter-spacing:0.067px;">Paint 3D</span>
<span class="t" id="l23" style="left:21.90px;top:96.20px;font-size:8.7px;color:#6a6a6a;letter-spacing:0.427px;">Clipboard</span>
<span class="t" id="l24" style="left:120.50px;top:96.20px;font-size:8.7px;color:#6a6a6a;letter-spacing:0.086px;">Image</span>
<span class="t" id="l25" style="left:203.00px;top:96.20px;font-size:8.7px;color:#6a6a6a;letter-spacing:0.255px;">Tools</span>
<span class="t" id="l26" style="left:374.40px;top:96.20px;font-size:8.7px;color:#6a6a6a;letter-spacing:0.000px;transform:scaleX(0.9943);transform-origin:0 50%;">Shapes</span>
<span class="t" id="l27" style="left:659.70px;top:96.20px;font-size:8.7px;color:#6a6a6a;letter-spacing:0.078px;">Colors</span>
<span class="t" id="l28" style="left:17.60px;top:591.60px;font-size:10px;color:#222;letter-spacing:0.000px;transform:scaleX(0.8768);transform-origin:0 50%;">974, 921px</span>
<span class="t" id="l29" style="left:269.30px;top:591.60px;font-size:10px;color:#222;letter-spacing:0.000px;transform:scaleX(0.8833);transform-origin:0 50%;">3120 × 2460px</span>
<span class="t" id="l30" style="left:883.00px;top:591.10px;font-size:10px;color:#222;letter-spacing:0.000px;transform:scaleX(0.8445);transform-origin:0 50%;">100%</span>
<span class="t" id="l31" style="left:71.20px;top:617.50px;font-size:11.6px;color:#333;letter-spacing:0.000px;transform:scaleX(0.9865);transform-origin:0 50%;">Type here to search</span>
<span class="t" id="l32" style="left:906.70px;top:616.50px;font-size:9.5px;color:#fff;letter-spacing:0.000px;transform:scaleX(0.8789);transform-origin:0 50%;">ENG</span>
<span class="t" id="l33" style="left:940.00px;top:609.70px;font-size:9.6px;color:#fff;letter-spacing:0.000px;transform:scaleX(0.9151);transform-origin:0 50%;">1:32 PM</span>
<span class="t" id="l34" style="left:937.50px;top:623.80px;font-size:9.6px;color:#fff;letter-spacing:0.000px;transform:scaleX(0.9583);transform-origin:0 50%;">9/5/2021</span>
<span class="t" id="l35" style="left:1001.40px;top:622.90px;font-size:8.5px;color:#fff;letter-spacing:0.000px;transform:scaleX(0.7604);transform-origin:0 50%;font-weight:bold;">1</span>
<span class="t" id="l36" style="left:60.00px;top:350.60px;font-size:16px;color:#0c0c0c;letter-spacing:1.045px;-webkit-text-stroke:0.5px #0c0c0c;">Hình d) Tia đã cho là tia tới do tia chiếu xuống gương</span>
<span class="t" id="l37" style="left:60.00px;top:370.60px;font-size:16px;color:#0c0c0c;letter-spacing:0.902px;-webkit-text-stroke:0.5px #0c0c0c;">Góc tới là :</span>
<span class="t" id="l38" style="left:59.90px;top:390.60px;font-size:16px;color:#0c0c0c;letter-spacing:0.703px;-webkit-text-stroke:0.5px #0c0c0c;">90</span>
<span class="t" id="l39" style="left:86.60px;top:390.60px;font-size:16px;color:#0c0c0c;letter-spacing:0.000px;transform:scaleX(0.9947);transform-origin:0 50%;-webkit-text-stroke:0.5px #0c0c0c;">-</span>
<span class="t" id="l40" style="left:100.00px;top:390.60px;font-size:16px;color:#0c0c0c;letter-spacing:1.203px;-webkit-text-stroke:0.5px #0c0c0c;">30</span>
<span class="t" id="l41" style="left:126.20px;top:390.60px;font-size:16px;color:#0c0c0c;letter-spacing:0.000px;transform:scaleX(0.7064);transform-origin:0 50%;-webkit-text-stroke:0.5px #0c0c0c;">=</span>
<span class="t" id="l42" style="left:140.30px;top:390.60px;font-size:16px;color:#0c0c0c;letter-spacing:0.203px;-webkit-text-stroke:0.5px #0c0c0c;">60</span>
<span class="t" id="l43" style="left:165.70px;top:390.60px;font-size:16px;color:#0c0c0c;letter-spacing:1.303px;-webkit-text-stroke:0.5px #0c0c0c;">độ</span>
<span class="t" id="l44" style="left:60.00px;top:410.60px;font-size:16px;color:#0c0c0c;letter-spacing:1.046px;-webkit-text-stroke:0.5px #0c0c0c;">Theo đluật phản xạ ánh sáng ta có góc tới= góc phản xạ</span>
<span class="t" id="l45" style="left:59.90px;top:430.60px;font-size:16px;color:#0c0c0c;letter-spacing:0.000px;transform:scaleX(0.8722);transform-origin:0 50%;-webkit-text-stroke:0.5px #0c0c0c;">=&gt;</span>
<span class="t" id="l46" style="left:82.70px;top:430.60px;font-size:16px;color:#0c0c0c;letter-spacing:1.261px;-webkit-text-stroke:0.5px #0c0c0c;">i=i&#x27;</span>
<span class="t" id="l47" style="left:111.10px;top:430.60px;font-size:16px;color:#0c0c0c;letter-spacing:0.000px;transform:scaleX(0.7064);transform-origin:0 50%;-webkit-text-stroke:0.5px #0c0c0c;">=</span>
<span class="t" id="l48" style="left:125.30px;top:430.60px;font-size:16px;color:#0c0c0c;letter-spacing:0.203px;-webkit-text-stroke:0.5px #0c0c0c;">60</span>
<span class="t" id="l49" style="left:150.70px;top:430.60px;font-size:16px;color:#0c0c0c;letter-spacing:0.603px;-webkit-text-stroke:0.5px #0c0c0c;">độ</span>
</body></html>
